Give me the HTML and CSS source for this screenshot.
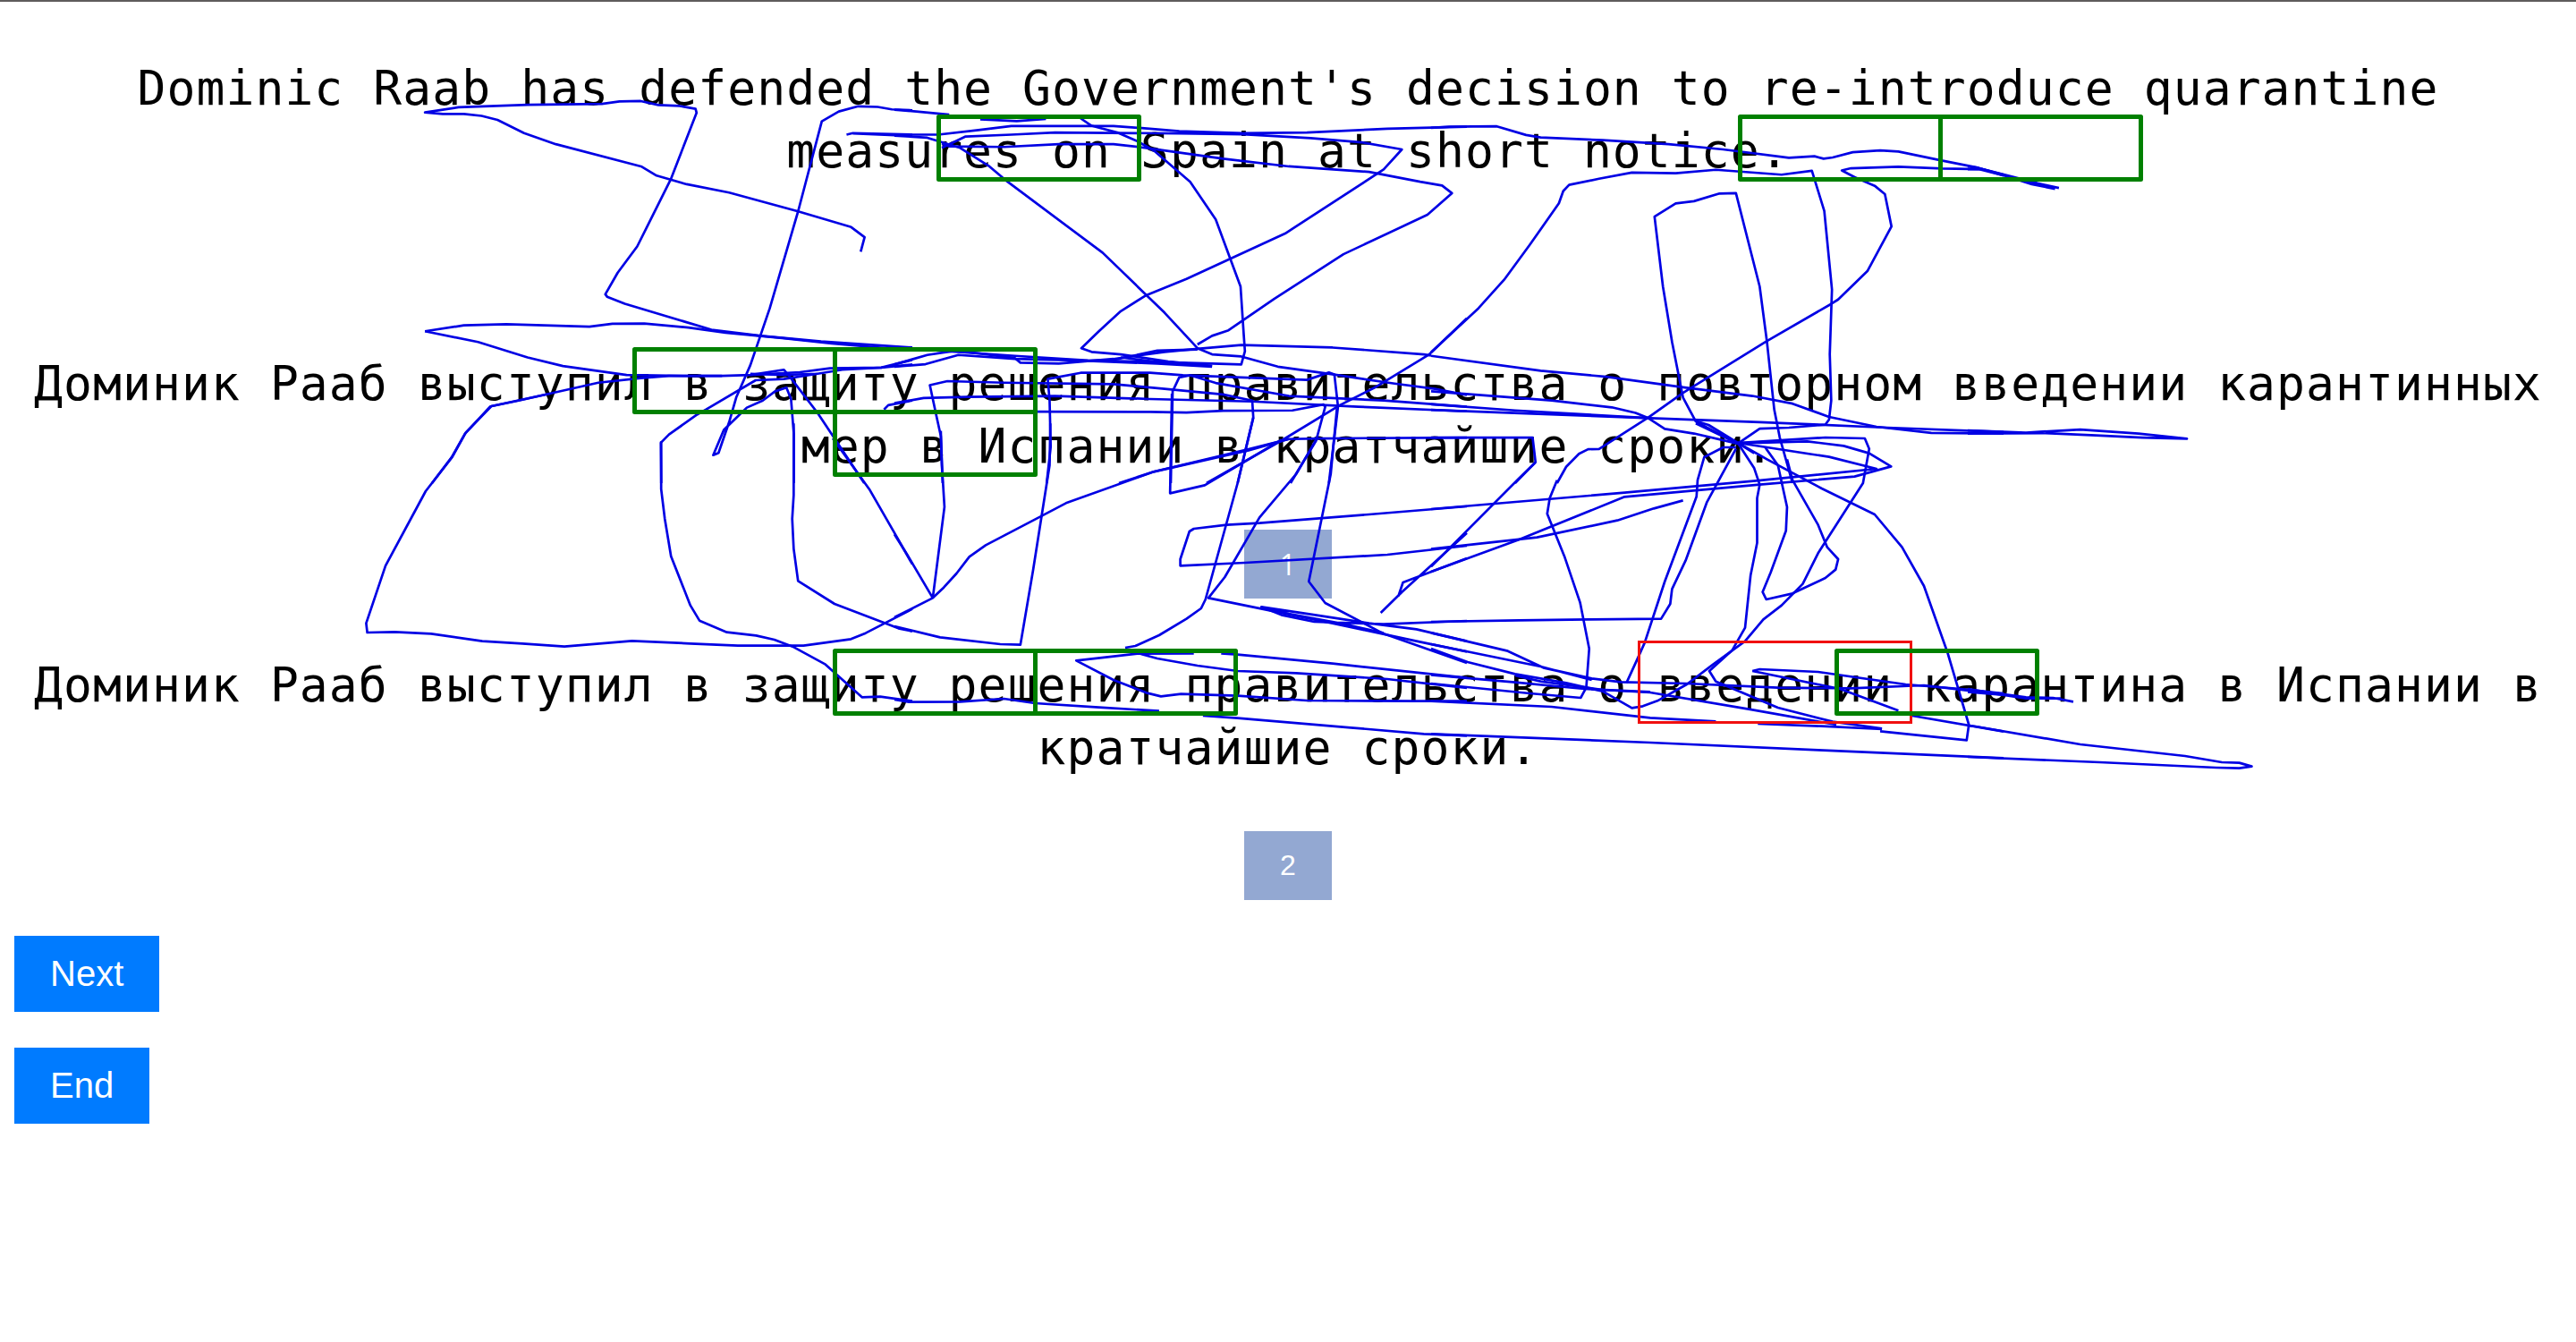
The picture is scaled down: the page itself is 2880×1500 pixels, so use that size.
FILE: index.html
```html
<!DOCTYPE html>
<html lang="en">
<head>
<meta charset="utf-8">
<title>Translation comparison</title>
<link rel="stylesheet" href="styles.css">
</head>
<body>
<main class="page">
  <p class="sentence source">Dominic Raab has defended the Government's decision to re-introduce quarantine measures on Spain at short notice.</p>

  <section class="option">
    <p class="sentence" lang="ru">Доминик Рааб выступил в защиту решения правительства о повторном введении карантинных мер в Испании в кратчайшие сроки.</p>
    <button class="choice choice-first" type="button">1</button>
  </section>

  <section class="option">
    <p class="sentence" lang="ru">Доминик Рааб выступил в защиту решения правительства о введении карантина в Испании в кратчайшие сроки.</p>
    <button class="choice" type="button">2</button>
  </section>

  <nav class="actions">
    <button class="action" type="button">Next</button>
    <button class="action" type="button">End</button>
  </nav>
</main>

<!-- Gaze trail and fixation boxes; the trail is stored tile by tile -->
<svg class="overlay" width="2880" height="1500" viewBox="0 0 2880 1500" aria-hidden="true">
  <g class="trail">
    <g transform="translate(400 0) scale(.39541 .34439)">
      <path d="M1422 817L1433 770L1395 737L1245 686L1050 625L930 598L845 570L803 541L560 468L470 432L395 389L350 376L300 370L240 370L190 365L285 348L480 340L690 337L740 329L800 328L850 341L910 344L955 353L958 366L885 582L790 800L735 885L700 955L705 963L755 986L1000 1070L1140 1090L1310 1108L1568 1128"/>
      <path d="M190 1075L300 1056L420 1052L590 1058L655 1060L720 1051L810 1050L935 1063L1040 1080L1200 1097L1340 1115L1568 1137"/>
      <path d="M190 1075L340 1110L480 1160L580 1188L760 1217L930 1220L1030 1220L1110 1217L1205 1200L1225 1228L1300 1340L1432 1568"/>
      <path d="M1110 1217L1250 1208L1335 1195L1480 1193L1568 1168"/>
      <path d="M1110 1213L1200 1217L1300 1213L1370 1200L1480 1193L1568 1183"/>
      <path d="M210 1568L265 1485L303 1408L375 1319L455 1300L680 1242L800 1227L880 1220L1030 1220"/>
      <path d="M1568 358L1510 355L1470 347L1415 345L1360 362L1312 394L1245 686L1165 1000L1110 1185L1070 1290L1050 1370L1020 1470L1005 1477L1035 1395L1080 1345L1100 1323L1145 1300L1180 1270L1212 1258L1225 1295L1233 1410L1233 1568"/>
      <path d="M1300 1213L1205 1230L1125 1234L985 1329L960 1345L880 1410L857 1437L858 1568"/>
      <path d="M1382 437L1400 432L1568 437M1400 433L1568 441"/>
      <path d="M1488 1329L1500 1315L1568 1300"/>
    </g>
    <g transform="translate(1000 0) scale(.40816 .34439)">
      <path d="M0 356L60 362L150 372M235 387L335 393L415 386M510 384L540 408L610 430L665 458L712 490L810 590L880 712L948 930L957 1090L960 1140L950 1183L870 1180L720 1175L620 1160"/>
      <path d="M0 437L120 437L230 422L320 409L600 409L670 415L780 426L955 432L1130 430L1350 418L1568 411"/>
      <path d="M0 440L90 447L180 480L260 540L310 590L570 820L740 1015L830 1130L870 1150L950 1157L1050 1190L1200 1215L1370 1245L1480 1262L1568 1282"/>
      <path d="M130 480L195 443L320 437L440 430L780 433L955 436L1140 448L1280 462L1390 485L1340 550L1070 758L800 905L690 958L620 1010L560 1075L512 1130L540 1142L620 1150L750 1173L870 1188"/>
      <path d="M130 467L150 475L300 477L450 468L600 468L690 480L900 515L1080 540L1300 558L1440 590L1500 602L1527 627L1460 697L1230 825L1040 970L915 1072L870 1090L830 1118"/>
      <path d="M0 1126L120 1138L330 1155L530 1170L750 1175L870 1188"/>
      <path d="M0 1183L90 1152L170 1138L330 1162L345 1177L450 1180L600 1165L740 1142L830 1132L950 1120L1200 1128L1450 1150L1470 1154"/>
      <path d="M0 1190L85 1182L175 1152L330 1165L500 1170L720 1180L870 1190M500 1172L600 1168L720 1138L830 1134"/>
      <path d="M0 1308L80 1292L200 1288L440 1285L700 1295L980 1303L1270 1320L1568 1335"/>
      <path d="M132 1568L127 1415L115 1350L97 1250L145 1237L300 1242L600 1247L740 1262L900 1280L980 1300L983 1355L940 1568"/>
      <path d="M417 1568L428 1450L425 1300L420 1230L510 1210L700 1210L790 1218L1000 1227L1130 1233L1190 1209L1205 1215L1215 1320L1190 1568"/>
      <path d="M757 1568L762 1270L780 1225L810 1218L880 1243L1080 1285L1340 1300L1568 1320"/>
      <path d="M390 1336L700 1337L800 1339L900 1333L1090 1332L1175 1313L1180 1320L1155 1430L1085 1568"/>
      <path d="M615 1568L710 1531L970 1458L1080 1425L1170 1423L1568 1420"/>
      <path d="M855 1568L1060 1430L1220 1315L1320 1255L1465 1150L1568 1033"/>
    </g>
    <g transform="translate(1600 0) scale(.40816 .34439)">
      <path d="M0 415L50 411L180 410L260 438L300 446L470 455L650 468L800 485L980 512L1050 507L1075 515L1100 511L1155 494L1230 488L1280 492L1395 520L1500 545L1568 570"/>
      <path d="M1568 567L1510 549L1400 547L1280 541L1150 546L1125 553L1160 575L1215 603L1243 630L1261 735L1195 880L1115 972L1098 985L918 1108L690 1275L595 1355L460 1457L430 1458L405 1473L370 1515L345 1568"/>
      <path d="M0 1143L130 1000L200 908L270 795L350 660L362 620L378 600L460 580L550 560L670 562L780 551L960 567L1043 554L1077 685L1098 940L1092 1150L1096 1300L1090 1362L1080 1378L980 1388L900 1391L840 1440"/>
      <path d="M840 1440L725 1368L690 1290L660 1110L635 930L612 703L670 660L720 653L790 628L835 627L900 930L920 1110L940 1330L955 1420L990 1568"/>
      <path d="M0 1155L300 1203L480 1223L690 1257L880 1285L990 1310L1090 1353L1220 1385L1370 1405L1568 1407"/>
      <path d="M0 1270L330 1300L495 1322L560 1340L595 1357L640 1392L720 1407L840 1440"/>
      <path d="M0 1312L230 1332L600 1357L900 1370L1250 1388L1568 1402"/>
      <path d="M0 1330L260 1342L600 1357"/>
      <path d="M0 1420L278 1420L286 1500L230 1568"/>
    </g>
    <g transform="translate(2200 0) scale(.43367 .34439)">
      <path d="M0 540L20 543L120 575L180 595L235 610M0 549L30 549L100 572L165 598L225 613"/>
      <path d="M0 1397L150 1404L290 1394L440 1407L500 1415L565 1424L450 1420L330 1413L200 1406L0 1407"/>
    </g>
    <g transform="translate(380 440) scale(.40816 .33333)">
      <path d="M575 0L415 42L345 130L308 212L235 327L125 577L72 770L75 801L150 799L250 805L390 830L500 838L615 848L800 829L960 838L1090 845L1270 845L1400 823L1440 803L1568 722"/>
      <path d="M880 160L880 320L890 420L907 545L960 710L985 761L1060 800L1140 811L1190 825L1240 848L1330 908L1430 1018L1480 1016L1568 1031"/>
      <path d="M1243 100L1243 340L1239 420L1243 520L1255 628L1355 705L1490 768L1530 787L1568 797"/>
      <path d="M1350 150L1450 320L1530 490L1568 572"/>
    </g>
    <g transform="translate(1000 440) scale(.40816 .33333)">
      <path d="M0 472L35 540L105 685M0 750L105 685L135 650L170 603L205 547L250 508L400 412L470 367L710 262L970 190L1080 152"/>
      <path d="M0 780L125 817L290 840L345 842L380 590L425 240L427 100"/>
      <path d="M105 685L137 380L130 240L127 125"/>
      <path d="M983 80L940 300L852 690L840 720L800 755L725 810L660 846L632 852"/>
      <path d="M760 0L755 334L850 307L1060 155"/>
      <path d="M1155 155L1100 270L1000 415L905 615L860 685L1200 770L1430 830L1568 865"/>
      <path d="M1212 50L1195 270L1165 450L1135 630L1180 702L1340 805L1568 903"/>
      <path d="M1568 378L1300 405L1000 434L910 440L820 453L808 462L783 555L783 577L960 567L1350 540L1568 510"/>
      <path d="M1568 830L1430 790L1300 770L1140 740L1005 715L1060 742L1150 765L1340 773L1568 762M1005 715L1080 738L1230 772L1340 803"/>
      <path d="M1332 735L1390 665L1568 467M1380 680L1393 633L1568 552"/>
      <path d="M820 871L665 872L498 895L600 960L690 1003L730 1015L785 1007L940 1013L1130 1029L1430 1031L1568 1031M895 871L940 875L1200 905L1568 953"/>
      <path d="M675 873L720 888L830 912L940 930L1100 937L1350 957L1568 987"/>
      <path d="M0 1026L40 1034L180 1033L300 1023L385 1038L560 1052L725 1064M845 1080L940 1088L1250 1120L1450 1141L1568 1147"/>
    </g>
    <g transform="translate(1600 440) scale(.40816 .33333)">
      <path d="M0 387L530 332L890 292L1220 252L1090 212L920 180L840 165"/>
      <path d="M0 597L240 490L530 346L900 305L1160 278L1260 244L1200 200L1130 175L1030 160L900 165L840 165"/>
      <path d="M0 521L290 482L510 425L610 385L690 358"/>
      <path d="M286 230L240 285L0 580"/>
      <path d="M345 290L325 350L318 403L365 545L408 700L433 855L425 985L410 1020L270 1005L0 972"/>
      <path d="M835 180L800 180L748 213L730 290L727 345L640 630L585 835L565 890L535 970"/>
      <path d="M835 185L755 365L697 560L660 655L655 705L630 755L430 757L240 760L0 765"/>
      <path d="M840 165L885 250L900 305L893 350L893 500L875 610L860 785L825 860L762 930L780 965L950 1053L1100 1100L1235 1123"/>
      <path d="M840 165L920 220L1070 318L1215 405L1290 515L1350 645L1415 870L1473 1110L1467 1162L1230 1132M1110 1110L870 1058L600 1002L470 993L300 965L230 945"/>
      <path d="M840 165L1080 147L1188 150L1200 185L1183 300L1060 535L1018 638L960 710L910 757L860 830L770 910L700 975L620 1030L580 1048L550 1054L470 998L370 970L230 940L100 900L0 855"/>
      <path d="M915 180L950 240L975 380L972 460L930 600L908 665L918 690L990 670L1080 618L1108 590L1115 555L1085 515L1060 440L990 290L975 220"/>
      <path d="M725 92L760 105L840 165L885 200M725 100L820 155"/>
      <path d="M0 802L210 863L310 920L440 955L520 967L700 972L950 986L1150 988L1350 978L1568 1010M0 840L300 915L440 960"/>
      <path d="M0 943L230 968L420 990L600 1000"/>
      <path d="M0 1031L330 1050L600 1087L780 1099M895 1107L1070 1115L1235 1125"/>
      <path d="M0 1141L600 1170L1060 1195L1568 1222"/>
      <path d="M880 930L900 924L1060 933L1300 975L1450 990L1568 1005M880 930L1120 990L1280 1063M1318 1080L1568 1133"/>
    </g>
    <g transform="translate(2200 640) scale(.43367 .33333)">
      <path d="M0 513L20 516L290 576L560 615L655 636L700 638L732 650L700 656L640 654L340 636L0 618"/>
      <path d="M0 390L60 402L150 418L220 420L272 433M0 400L90 410L150 422L240 422"/>
    </g>
  </g>
  <g class="focus">
    <rect x="1832.5" y="717.5" width="304" height="90"/>
  </g>
  <g class="fixations">
    <rect x="1049.5" y="130.5" width="224" height="70"/>
    <rect x="1945.5" y="130.5" width="224" height="70"/>
    <rect x="2169.5" y="130.5" width="224" height="70"/>
    <rect x="709.5" y="390.5" width="224" height="70"/>
    <rect x="933.5" y="390.5" width="224" height="70"/>
    <rect x="933.5" y="460.5" width="224" height="70"/>
    <rect x="933.5" y="727.5" width="224" height="70"/>
    <rect x="1157.5" y="727.5" width="224" height="70"/>
    <rect x="2053.5" y="727.5" width="224" height="70"/>
  </g>
</svg>
</body>
</html>
```
FILE: styles.css
```css
body {
  margin: 0;
  background: #fff;
  color: #000;
}

.page {
  box-sizing: border-box;
  min-height: 1500px;
  padding: 62px 16px 0;
  border-top: 2px solid #5f5c5c;
}

.sentence {
  margin: 0;
  font-family: Consolas, "DejaVu Sans Mono", monospace;
  font-size: 53px;
  line-height: 70px;
  letter-spacing: 1.08px;
  text-align: center;
}

.source {
  margin-bottom: 190px;
}

.option {
  display: flex;
  flex-direction: column;
  align-items: center;
  gap: 58px;
  margin-bottom: 62px;
}

.option .sentence {
  align-self: stretch;
}

.choice,
.action {
  border: 0;
  padding: 20px 40px;
  color: #fff;
  font-family: "Liberation Sans", Arial, sans-serif;
}

.choice {
  width: 98px;
  height: 77px;
  padding: 20px 0;
  background: #93a8d2;
  font-size: 32px;
  line-height: 37px;
}

/* a plain "1" without a foot */
.choice-first {
  font-family: "Open Sans", "Noto Sans", sans-serif;
}

.actions {
  display: flex;
  flex-direction: column;
  align-items: flex-start;
  gap: 40px;
  margin-top: -22px;
}

.action {
  height: 85px;
  background: #007bff;
  font-size: 40px;
  line-height: 45px;
}

.overlay {
  position: absolute;
  top: 0;
  left: 0;
  pointer-events: none;
}

.trail path {
  fill: none;
  stroke: #0000e4;
  stroke-width: 2.7px;
  stroke-linejoin: round;
  vector-effect: non-scaling-stroke;
}

.fixations rect {
  fill: none;
  stroke: #008000;
  stroke-width: 5px;
  stroke-linejoin: round;
}

.focus rect {
  fill: none;
  stroke: #f01010;
  stroke-width: 3px;
}
```
